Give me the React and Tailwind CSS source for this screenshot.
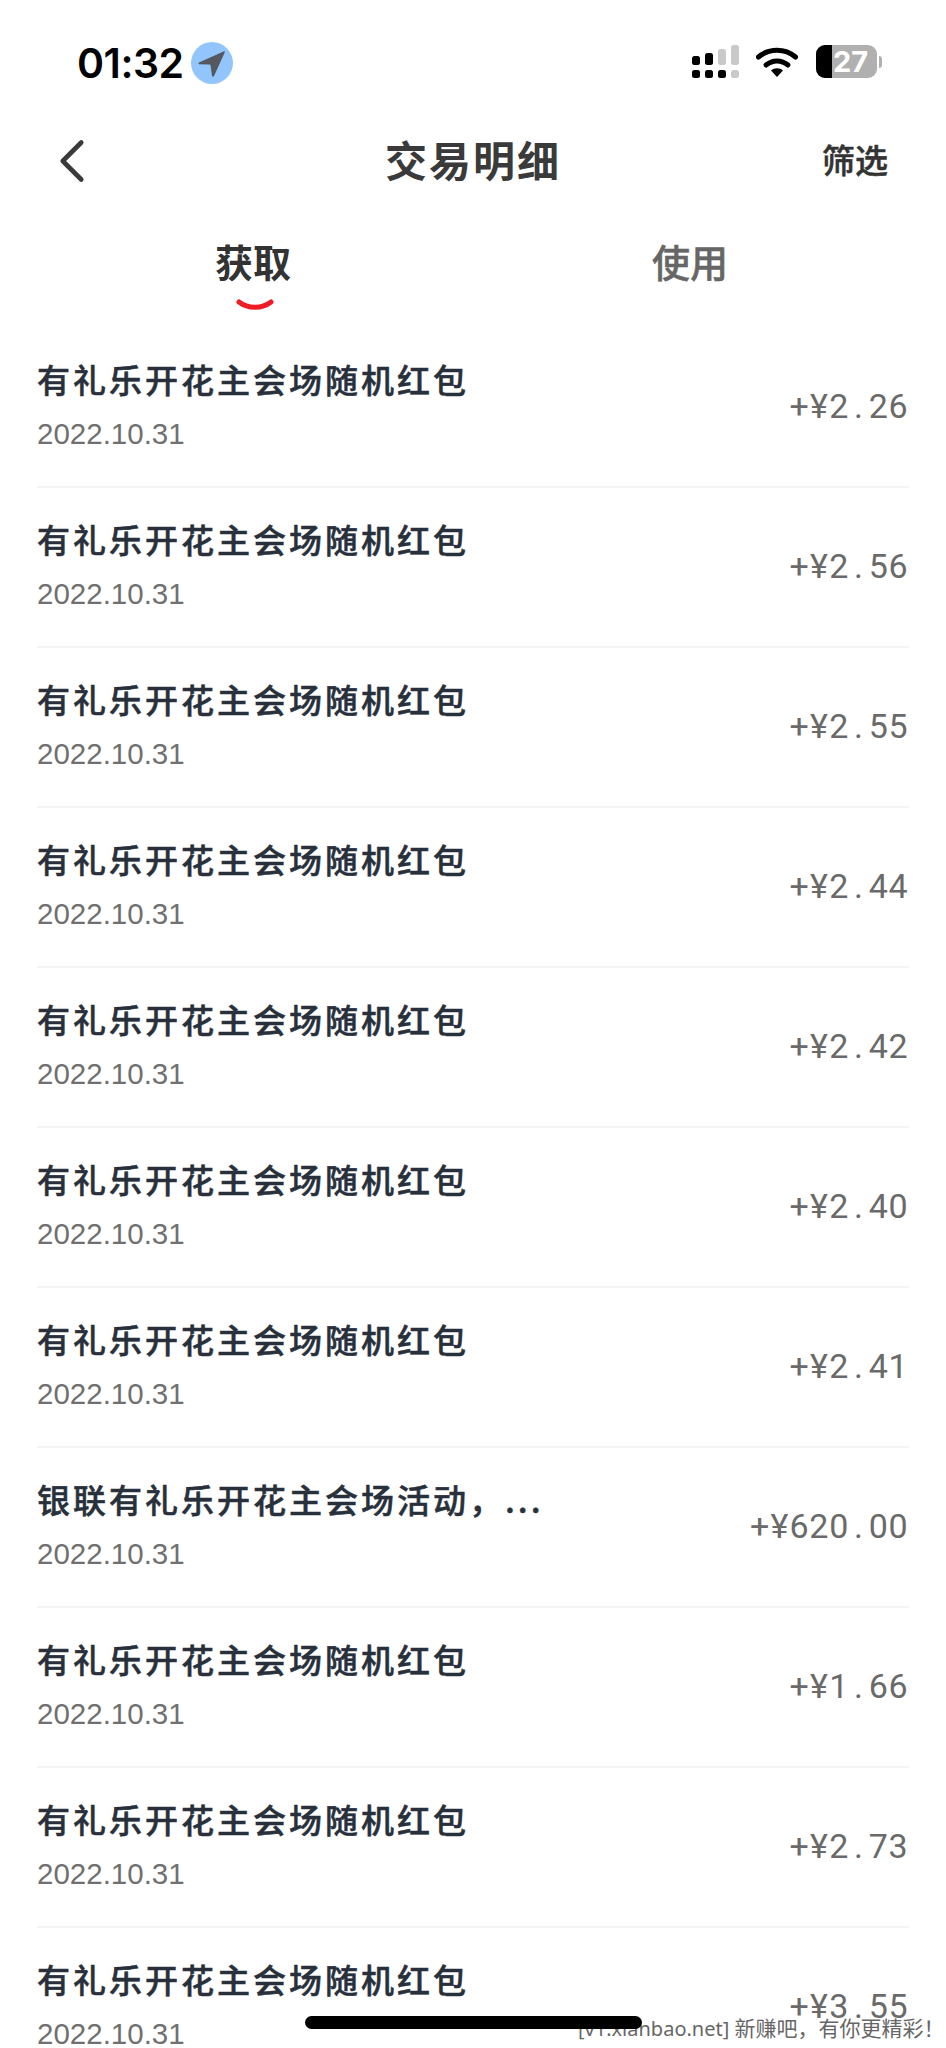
import React from 'react';
import { ChevronLeft } from 'lucide-react';

const cjk = 'font-["Noto_Sans_CJK_SC","Noto_Sans",sans-serif]';

const rows = [
  ['有礼乐开花主会场随机红包', '+¥2.26'],
  ['有礼乐开花主会场随机红包', '+¥2.56'],
  ['有礼乐开花主会场随机红包', '+¥2.55'],
  ['有礼乐开花主会场随机红包', '+¥2.44'],
  ['有礼乐开花主会场随机红包', '+¥2.42'],
  ['有礼乐开花主会场随机红包', '+¥2.40'],
  ['有礼乐开花主会场随机红包', '+¥2.41'],
  ['银联有礼乐开花主会场活动，...', '+¥620.00'],
  ['有礼乐开花主会场随机红包', '+¥1.66'],
  ['有礼乐开花主会场随机红包', '+¥2.73'],
  ['有礼乐开花主会场随机红包', '+¥3.55'],
];

function Signal() {
  return (
    <svg width="48" height="33" viewBox="0 0 48 33">
      <rect x="0" y="11" width="8" height="9" rx="2.5" fill="#000" />
      <rect x="0" y="25" width="8" height="8" rx="2.5" fill="#000" />
      <rect x="13" y="8" width="8" height="12" rx="2.5" fill="#000" />
      <rect x="13" y="25" width="8" height="8" rx="2.5" fill="#000" />
      <rect x="26" y="4" width="8" height="16" rx="2.5" fill="#c9c9c9" />
      <rect x="26" y="25" width="8" height="8" rx="2.5" fill="#000" />
      <rect x="39" y="0" width="8" height="20" rx="2.5" fill="#c9c9c9" />
      <rect x="39" y="25" width="8" height="8" rx="2.5" fill="#c9c9c9" />
    </svg>
  );
}

function Wifi() {
  return (
    <svg width="42" height="32" viewBox="0 0 42 32">
      <path d="M2.5 11C13 2 29 2 39.5 11" fill="none" stroke="#000" strokeWidth="5" strokeLinecap="round" />
      <path d="M10 19C16.500 13.500 25.500 13.500 32 19" fill="none" stroke="#000" strokeWidth="5" strokeLinecap="round" />
      <path d="M15 24.500C18.500 21.500 23.500 21.500 27 24.500L21 31Z" fill="#000" />
    </svg>
  );
}

// fixed advance per character, the app's number font is monospaced
function Amount({ value }) {
  return (
    <span className="mb-[2px] mr-[1px] flex font-['Roboto'] text-[34px] leading-none text-[#6a6a6a]">
      {value.split('').map((c, i) => (
        <span key={i} className="w-[19.8px] text-center">{c}</span>
      ))}
    </span>
  );
}

export default function App() {
  return (
    <div className={`relative h-[2048px] w-[946px] overflow-hidden bg-white ${cjk}`}>
      {/* status bar */}
      <div className="flex h-[110px] items-start justify-between pl-[77px] pr-[64px] pt-[42px]">
        <div className="flex items-center gap-[7px]">
          <span className="font-['Inter'] text-[41px] leading-[42px] font-semibold tracking-[-0.5px] text-black">01:32</span>
          <span className="flex h-[42px] w-[42px] items-center justify-center rounded-full bg-[#93c5fd]">
            <svg width="30" height="30" viewBox="0 0 30 30">
              <path d="M2 14.500L26.500 3.500C27.500 3 28 3.700 27.700 4.500L17 28C16.500 29 15.200 28.800 15 27.800L13.500 17.300C13.400 16.800 13.100 16.500 12.600 16.400L2.300 16.200C1.300 16.100 1.100 15 2 14.500Z" fill="#55585e" />
            </svg>
          </span>
        </div>
        <div className="flex items-center gap-[18px] pt-[3px]">
          <div className="mr-[-2px]"><Signal /></div>
          <Wifi />
          <div className="flex items-center gap-[2px]">
            <div className="relative flex h-[33px] w-[61px] items-center justify-center overflow-hidden rounded-[9px] bg-[#b0b0b0]">
              <div className="absolute inset-y-0 left-0 w-[16px] bg-black" />
              <span className="relative ml-[8px] font-['Inter'] text-[29px] leading-none font-bold text-white">27</span>
            </div>
            <div className="h-[12px] w-[3px] rounded-r-full bg-[#b0b0b0]" />
          </div>
        </div>
      </div>

      {/* nav */}
      <div className="relative flex h-[102px] items-center justify-center pb-[5px]">
        <ChevronLeft className="absolute left-[35px] top-[14px] h-[74px] w-[74px] text-[#3a3a3a]" strokeWidth={1.5} />
        <h1 className="text-[42px] leading-none font-bold tracking-[2px] text-[#3a3a3a]">交易明细</h1>
        <span className="absolute right-[58px] top-[29px] text-[33px] leading-[40px] font-medium text-[#333] [-webkit-text-stroke:0.5px]">筛选</span>
      </div>

      {/* tabs */}
      <div className="flex h-[116px] pl-[215px] pt-[27px]">
        <div className="relative">
          <span className="text-[38px] leading-[44px] font-bold text-[#333]">获取</span>
          <svg className="absolute left-[21px] top-[60px]" width="38" height="14" viewBox="0 0 38 14">
            <path d="M3 3C12 10 26 10 35 3" fill="none" stroke="#ee1c25" strokeWidth="5" strokeLinecap="round" />
          </svg>
        </div>
        <span className="ml-[361px] text-[38px] leading-[44px] font-medium text-[#666] [-webkit-text-stroke:0.5px]">使用</span>
      </div>

      {/* list */}
      <div className="mx-[37px] flex flex-col">
        {rows.map(([title, amount], i) => (
          <div key={i} className="flex h-[160px] shrink-0 items-center justify-between border-b-2 border-[#f4f4f4]">
            <div className="flex flex-col pb-[6px]">
              <span className="text-[33px] leading-[44px] font-medium tracking-[3px] text-[#28303c] [-webkit-text-stroke:0.5px]">{title}</span>
              <span className="mt-[16px] font-['Liberation_Sans'] text-[29.5px] leading-[34px] text-[#707070]">2022.10.31</span>
            </div>
            <Amount value={amount} />
          </div>
        ))}
      </div>

      {/* watermark lies under the home indicator */}
      <span className="absolute left-[578px] top-[2014px] font-['Noto_Sans','Noto_Sans_CJK_SC',sans-serif] text-[20px] leading-[28px] whitespace-nowrap text-[#666]">
        [v1.xianbao.net] <span className="text-[21px]">新赚吧，有你更精彩！</span>
      </span>
      <div className="absolute left-[305px] top-[2016px] h-[13px] w-[337px] rounded-full bg-black" />
    </div>
  );
}
